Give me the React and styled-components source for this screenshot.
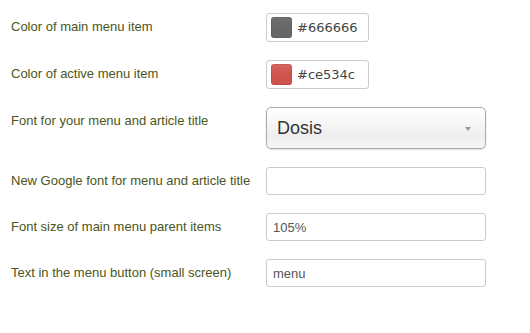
import React from 'react'
import styled, { createGlobalStyle } from 'styled-components'

const GlobalStyle = createGlobalStyle`
  html, body {
    margin: 0;
    padding: 0;
    background: #ffffff;
  }
`;

const Form = styled.div`
  padding: 13px 0 0 11px;
  font-family: "Liberation Sans", Arial, sans-serif;
`;

const Row = styled.div`
  display: flex;
  align-items: flex-start;
  margin-bottom: 18px;
`;

const Label = styled.label`
  width: 255px;
  flex: none;
  padding-top: 5px;
  font-size: 13px;
  line-height: 18px;
  color: #4a5520;
`;

const ColorBox = styled.div`
  display: flex;
  align-items: center;
  box-sizing: border-box;
  width: 103px;
  height: 29px;
  padding: 0 4px;
  gap: 5px;
  border: 1px solid #cccccc;
  border-radius: 3px;
  background: #fff;
`;

const Swatch = styled.span`
  width: 21px;
  height: 21px;
  border-radius: 3px;
  background: linear-gradient(${p => p.$light}, ${p => p.$color} 55%);
  box-shadow: inset 0 0 0 1px rgba(0, 0, 0, 0.08);
`;

const ColorText = styled.span`
  font-family: "DejaVu Sans", Verdana, sans-serif;
  font-size: 13px;
  color: #444;
`;

const Select = styled.div`
  position: relative;
  box-sizing: border-box;
  width: 220px;
  height: 42px;
  padding: 0 0 0 10px;
  display: flex;
  align-items: center;
  border: 1px solid #aaaaaa;
  border-radius: 5px;
  background: linear-gradient(#ffffff 0%, #f4f4f4 45%, #eeeeee 70%, #f6f6f6 100%);
  box-shadow: 0 1px 2px rgba(0, 0, 0, 0.12);
  font-size: 18px;
  color: #333;
`;

const Arrow = styled.span`
  position: absolute;
  right: 14px;
  top: 19px;
  width: 0;
  height: 0;
  border-left: 3px solid transparent;
  border-right: 3px solid transparent;
  border-top: 4px solid #999;
`;

const TextInput = styled.input`
  box-sizing: border-box;
  width: 220px;
  height: 28px;
  padding: 0 6px;
  border: 1px solid #cccccc;
  border-radius: 3px;
  font-family: "Liberation Sans", Arial, sans-serif;
  font-size: 13px;
  color: #555;
  outline: none;
`;

const fields = [
  { label: 'Color of main menu item', color: '#666666', light: '#707070' },
  { label: 'Color of active menu item', color: '#ce534c', light: '#d8655e' },
];

const inputs = [
  { label: 'New Google font for menu and article title', value: '' },
  { label: 'Font size of main menu parent items', value: '105%' },
  { label: 'Text in the menu button (small screen)', value: 'menu' },
];

export default function App() {
  return (
    <>
      <GlobalStyle />
      <Form>
        {fields.map(f => (
          <Row key={f.label}>
            <Label>{f.label}</Label>
            <ColorBox>
              <Swatch $color={f.color} $light={f.light} />
              <ColorText>{f.color}</ColorText>
            </ColorBox>
          </Row>
        ))}
        <Row>
          <Label>Font for your menu and article title</Label>
          <Select>
            Dosis
            <Arrow />
          </Select>
        </Row>
        {inputs.map(i => (
          <Row key={i.label}>
            <Label>{i.label}</Label>
            <TextInput defaultValue={i.value} />
          </Row>
        ))}
      </Form>
    </>
  )
}
